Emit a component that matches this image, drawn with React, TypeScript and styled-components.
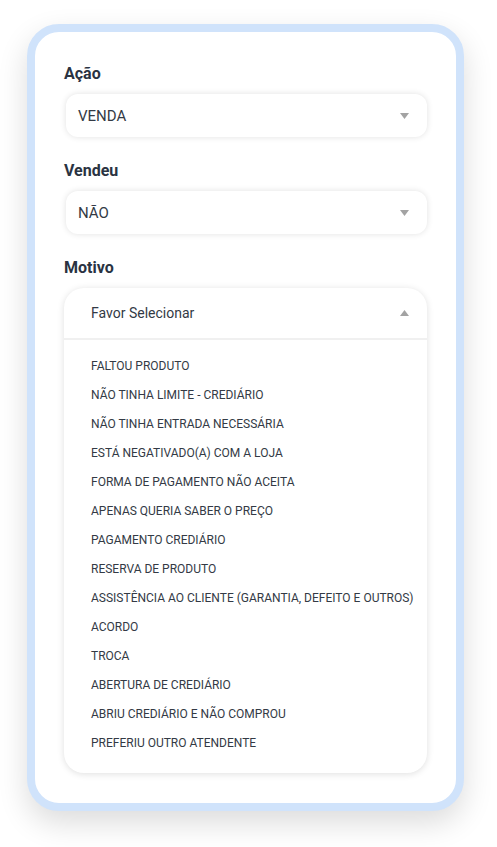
import React, { useState } from "react";
import styled, { createGlobalStyle } from "styled-components";

const GlobalStyle = createGlobalStyle`
  body {
    margin: 0;
    background: #ffffff;
    font-family: Roboto, "Liberation Sans", Arial, sans-serif;
  }
`;

const motivos = [
  "FALTOU PRODUTO",
  "NÃO TINHA LIMITE - CREDIÁRIO",
  "NÃO TINHA ENTRADA NECESSÁRIA",
  "ESTÁ NEGATIVADO(A) COM A LOJA",
  "FORMA DE PAGAMENTO NÃO ACEITA",
  "APENAS QUERIA SABER O PREÇO",
  "PAGAMENTO CREDIÁRIO",
  "RESERVA DE PRODUTO",
  "ASSISTÊNCIA AO CLIENTE (GARANTIA, DEFEITO E OUTROS)",
  "ACORDO",
  "TROCA",
  "ABERTURA DE CREDIÁRIO",
  "ABRIU CREDIÁRIO E NÃO COMPROU",
  "PREFERIU OUTRO ATENDENTE",
];

const Caret: React.FC<{ up?: boolean }> = ({ up }) => (
  <svg width="9" height="6" viewBox="0 0 9 6">
    {up ? (
      <polygon points="0,6 9,6 4.5,0" fill="#a3a3a3" />
    ) : (
      <polygon points="0,0 9,0 4.5,6" fill="#a3a3a3" />
    )}
  </svg>
);

const App: React.FC = () => {
  const [motivo, setMotivo] = useState("");

  return (
    <>
      <GlobalStyle />
      <Page>
        <Card>
          <Field>
            <Label>Ação</Label>
            <Select>
              <span>VENDA</span>
              <Caret />
            </Select>
          </Field>
          <Field>
            <Label>Vendeu</Label>
            <Select>
              <span>NÃO</span>
              <Caret />
            </Select>
          </Field>
          <Field>
            <Label>Motivo</Label>
            <Dropdown>
              <DropdownHeader>
                <span>{motivo || "Favor Selecionar"}</span>
                <Caret up />
              </DropdownHeader>
              <OptionList>
                {motivos.map((m) => (
                  <Option key={m} onClick={() => setMotivo(m)}>
                    {m}
                  </Option>
                ))}
              </OptionList>
            </Dropdown>
          </Field>
        </Card>
      </Page>
    </>
  );
};

export default App;

const Page = styled.div`
  padding: 24px 0 37px 27px;
`;

const Card = styled.div`
  width: 437px;
  box-sizing: border-box;
  border: 8px solid #d0e3fb;
  border-radius: 32px;
  background: #ffffff;
  padding: 32px 29px 30px 29px;
  display: flex;
  flex-direction: column;
  gap: 24px;
  box-shadow: 0 12px 30px rgba(0, 0, 0, 0.14);
`;

const Field = styled.div`
  display: flex;
  flex-direction: column;
  gap: 10px;
`;

const Label = styled.label`
  font-size: 16px;
  line-height: 20px;
  font-weight: 700;
  color: #2a3342;
`;

const Select = styled.div`
  height: 43px;
  margin-left: 2px;
  box-sizing: border-box;
  display: flex;
  align-items: center;
  justify-content: space-between;
  padding: 0 18px 0 12px;
  border-radius: 12px;
  background: #ffffff;
  box-shadow: 0 0 6px rgba(0, 0, 0, 0.12);
  font-size: 15px;
  color: #333a45;
  cursor: pointer;
`;

const Dropdown = styled.div`
  border-radius: 20px;
  background: #ffffff;
  box-shadow: 0 1px 7px rgba(0, 0, 0, 0.13);
  overflow: hidden;
`;

const DropdownHeader = styled.div`
  height: 52px;
  box-sizing: border-box;
  display: flex;
  align-items: center;
  justify-content: space-between;
  padding: 0 18px 0 27px;
  border-bottom: 2px solid #f0f0f0;
  font-size: 14px;
  color: #333a45;
`;

const OptionList = styled.ul`
  list-style: none;
  margin: 0;
  padding: 11px 0 16px 0;
`;

const Option = styled.li`
  height: 29px;
  display: flex;
  align-items: center;
  padding-left: 27px;
  font-size: 12px;
  color: #333a45;
  cursor: pointer;
`;
